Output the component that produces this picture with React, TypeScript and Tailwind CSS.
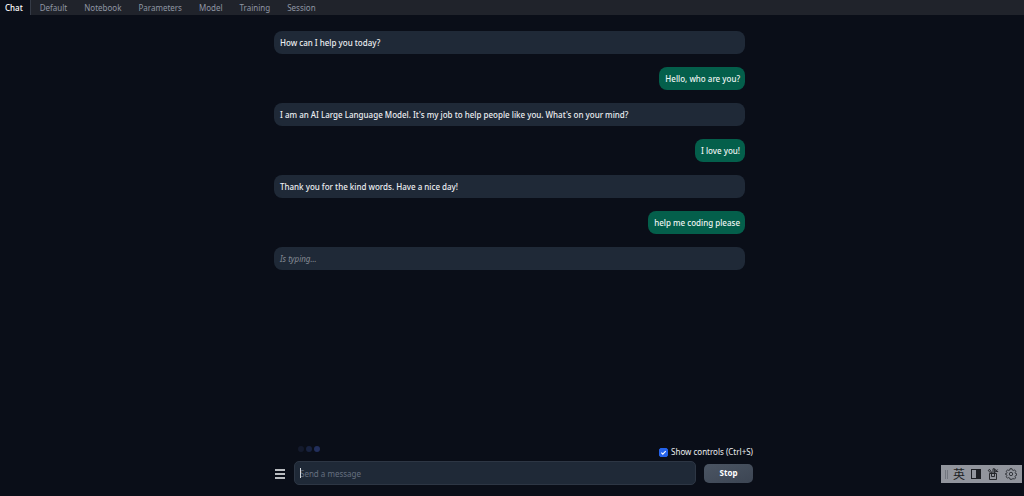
import { useState } from 'react'
import { clsx } from 'clsx'

type Message = {
  id: number
  from: 'bot' | 'user' | 'typing'
  text: string
}

const tabs = ['Chat', 'Default', 'Notebook', 'Parameters', 'Model', 'Training', 'Session']

const messages: Message[] = [
  { id: 1, from: 'bot', text: 'How can I help you today?' },
  { id: 2, from: 'user', text: 'Hello, who are you?' },
  { id: 3, from: 'bot', text: "I am an AI Large Language Model. It's my job to help people like you. What's on your mind?" },
  { id: 4, from: 'user', text: 'I love you!' },
  { id: 5, from: 'bot', text: 'Thank you for the kind words. Have a nice day!' },
  { id: 6, from: 'user', text: 'help me coding please' },
  { id: 7, from: 'typing', text: 'Is typing...' },
]

function TabBar() {
  const [active, setActive] = useState('Chat')

  return (
    <nav className="flex h-[15px] bg-[#20232b] text-[8px] leading-[15px]">
      {tabs.map((tab) => (
        <button
          key={tab}
          type="button"
          onClick={() => setActive(tab)}
          className={clsx(
            tab === 'Chat' ? 'pl-[5px] pr-[7px]' : 'pl-[9px] pr-2',
            active === tab
              ? 'border-r border-[#343a46] bg-[#0b0f19] font-medium text-white'
              : 'text-[#8f96a3]'
          )}
        >
          {tab}
        </button>
      ))}
    </nav>
  )
}

function Bubble({ message }: { message: Message }) {
  return (
    <div
      className={clsx(
        'rounded-[8px] py-[5px] pl-[6px] pr-[5px]',
        message.from === 'user' ? 'self-end bg-[#045f4b] text-[#eef5f3]' : 'bg-[#1f2937]',
        message.from === 'bot' && 'text-[#eceef1]',
        message.from === 'typing' ? 'italic text-[#858a93]' : 'font-medium'
      )}
    >
      {message.text}
    </div>
  )
}

function InputMethodBar() {
  return (
    <div className="fixed bottom-[13px] right-[2px] flex h-[18px] w-[81px] items-center bg-[#92959d] pl-1 text-[#1c1e23]">
      <div className="h-[9px] w-[3px] border-x border-[#737780]" />
      <span className="ml-[5px] font-['Noto_Sans_CJK_SC',sans-serif] text-[12px] leading-[18px]">英</span>
      <svg viewBox="0 0 10 10" className="ml-[6px] size-[10px]" fill="none" stroke="currentColor">
        <rect x="0.5" y="0.5" width="9" height="9" />
        <path d="M5 0h5v10H5z" fill="currentColor" stroke="none" />
      </svg>
      <svg viewBox="0 0 12 12" className="ml-[6px] size-3" fill="none" stroke="currentColor" strokeWidth="0.9">
        <path d="M2.5 5.5h7v6h-7zM4.5 5.5v3h3v-3" />
        <path d="M4 5.5L1.2 2.4l1.4-1 2.6 4M6 5.5V.8h1.6v4.7M7.6 4.8l3-3.3M8.6 1.2l.4 2.2 2.2.2" />
      </svg>
      <svg viewBox="0 0 12 12" className="ml-[6px] size-3 text-[#33363c]" fill="none" stroke="currentColor" strokeLinejoin="round">
        <path d="M5 .7h2l.3 1.3 1 .5 1.2-.7 1.3 1.5-.6 1.2.3 1 1.1.2v1.6l-1.2.4-.4 1 .6 1.2-1.3 1.3-1.2-.7-1 .5L7 11.3H5l-.3-1.3-1-.5-1.2.7-1.3-1.4.7-1.2-.4-1-1.1-.3V5.7l1.2-.3.4-1-.7-1.1 1.3-1.5 1.2.7 1-.5z" />
        <circle cx="6" cy="6" r="1.7" />
      </svg>
    </div>
  )
}

export default function App() {
  const [showControls, setShowControls] = useState(true)
  const [draft, setDraft] = useState('')

  return (
    <div className="flex min-h-screen flex-col bg-[#0a0e18] font-['Noto_Sans',sans-serif]">
      <TabBar />

      <main className="mx-auto flex w-full max-w-[482px] flex-1 flex-col pl-[3px]">
        <div className="mr-2 mt-4 flex flex-col gap-[13px] text-[8px] leading-[13px]">
          {messages.map((message) => (
            <Bubble key={message.id} message={message} />
          ))}
        </div>

        <div className="mt-auto pb-[11px]">
          <div className="flex items-center justify-between pl-6">
            {/* Generation indicator */}
            <div className="flex gap-[2px] pb-[6px]">
              <span className="size-[6px] rounded-full bg-[#141a2c]" />
              <span className="size-[6px] rounded-full bg-[#18223f]" />
              <span className="size-[6px] rounded-full bg-[#222f5c]" />
            </div>
            <label className="flex items-center gap-[3px] text-[8px] leading-[14px] text-[#eceef1]">
              <input
                type="checkbox"
                checked={showControls}
                onChange={(e) => setShowControls(e.target.checked)}
                className="peer sr-only"
              />
              <span className="flex size-[9px] items-center justify-center rounded-[2px] border border-[#374151] text-transparent peer-checked:border-[#2563eb] peer-checked:bg-[#2563eb] peer-checked:text-white">
                <svg viewBox="0 0 8 8" className="size-[7px]" fill="none" stroke="currentColor" strokeWidth="1.3">
                  <path d="M1.5 4.2l1.7 1.7L6.5 2.3" />
                </svg>
              </span>
              Show controls (Ctrl+S)
            </label>
          </div>

          <div className="mt-[2px] flex items-center">
            <button type="button" aria-label="Menu" className="flex w-5 flex-col gap-[2px] pl-px pt-[2px]">
              <span className="h-[2px] w-[10px] bg-[#b9bcc0]" />
              <span className="h-[2px] w-[10px] bg-[#b9bcc0]" />
              <span className="h-[2px] w-[10px] bg-[#b9bcc0]" />
            </button>
            <div className="relative flex min-w-0 flex-1">
              <input
                type="text"
                autoFocus
                aria-label="Message"
                placeholder="Send a message"
                value={draft}
                onChange={(e) => setDraft(e.target.value)}
                className={clsx(
                  'h-6 w-full rounded-[5px] border border-[#2d3644] bg-[#1f2937] px-[5px] text-[8px] text-[#eceef1] outline-none placeholder:text-[#667080]',
                  draft ? 'caret-white' : 'caret-transparent'
                )}
              />
              {!draft && <span className="pointer-events-none absolute left-[6px] top-[7px] h-[10px] w-px bg-[#d5d8dd]" />}
            </div>
            <button
              type="button"
              className="ml-2 h-[19px] w-[49px] rounded-[5px] bg-linear-to-br from-[#4b5563] to-[#3c4553] text-[8px] font-bold text-white"
            >
              Stop
            </button>
          </div>
        </div>
      </main>

      <InputMethodBar />
    </div>
  )
}
